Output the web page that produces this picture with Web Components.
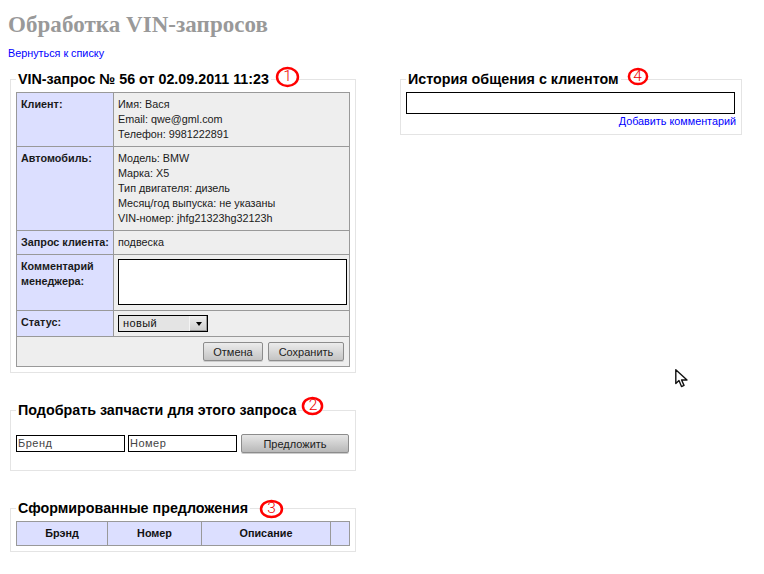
<!DOCTYPE html>
<html lang="ru"><head><meta charset="utf-8"><title>Обработка VIN-запросов</title>
<style>
html,body{margin:0;background:#fff}
body{font:10.8px/15px "Liberation Sans",Arial,sans-serif;color:#1a1a1a}
</style></head><body>
<vin-app></vin-app>
<script>
function el(name, html){
  customElements.define(name, class extends HTMLElement{
    constructor(){super();this.attachShadow({mode:'open'}).innerHTML=html;}
  });
}
const btnCss=`
button{font:11px "Liberation Sans",Arial,sans-serif;color:#222;border:1px solid #8c8c8c;border-radius:2px;padding:0;box-sizing:border-box;
background:linear-gradient(#ececec,#c4c4c4);box-shadow:0 1px 0 #ccc;}`;

el('mouse-pointer',`<style>:host{position:absolute;left:675px;top:369px;width:14px;height:19px;display:block}</style>
<svg width="14" height="19" viewBox="0 0 14 19"><path d="M.8.8 L.8 14.5 L4 11.6 L6.5 17.6 L9 16.4 L6.6 11 L12 11 Z" fill="#fff" stroke="#111" stroke-width="1.4" stroke-linejoin="round"/></svg>`);

el('vin-badge',`<style>
:host{position:absolute;display:flex;align-items:center;justify-content:center;
 left:calc(100% + var(--dx,6px));top:var(--dy,-3px);width:var(--w,22px);height:var(--h,19px);
 color:#e00;font:300 15.5px/1 Roboto,"Liberation Sans",Arial,sans-serif}
svg{position:absolute;inset:0;width:100%;height:100%;overflow:visible}
span{position:relative}
ellipse{fill:#fff;stroke:#f00;stroke-width:2.5}
</style><svg preserveAspectRatio="none" viewBox="0 0 22 19"><ellipse cx="11" cy="9.5" rx="10" ry="8.5" vector-effect="non-scaling-stroke"/></svg><span><slot></slot></span>`);

el('vin-panel',`<style>
:host{display:block}
fieldset{margin:0;border:1px solid #e4e4e4;padding:5px;min-width:0;display:block}
legend{margin:0;padding:0 2px;font:bold 14.3px/16px "Liberation Sans",Arial,sans-serif;color:#000;position:relative}
</style><fieldset><legend><slot name="title"></slot><slot name="badge"></slot></legend><slot></slot></fieldset>`);

el('data-row',`<style>
:host{display:grid;grid-template-columns:96px 1fr;column-gap:1px;background:#999;border-top:1px solid #999}
:host([first]){border-top:0}
.l{background:#dcdfff;padding:4px 3px 4px 4px;font-weight:bold;line-height:15px}
.v{background:#eee;padding:4px 3px 4px 4px;min-width:0;line-height:15px}
:host([tall]) .v{padding-bottom:5px}
</style><div class="l"><slot name="label"></slot></div><div class="v"><slot></slot></div>`);

el('data-form',`<style>
:host{display:block;border:1px solid #999;background:#999}
</style><slot></slot>`);

el('form-foot',`<style>
:host{display:flex;justify-content:flex-end;gap:5px;background:#eee;border-top:1px solid #999;padding:5px}
${btnCss}
button{height:19px}
.a{width:60px}.b{width:76px}
</style><button class="a">Отмена</button><button class="b">Сохранить</button>`);

el('fake-select',`<style>
:host{display:flex;box-sizing:border-box;width:90px;height:17px;border:1px solid #000;background:#e4e4e4;
 font:11px/15px "Liberation Sans",Arial,sans-serif;letter-spacing:.4px;color:#111}
.t{flex:1;padding-left:4px}
.b{width:17px;background:linear-gradient(#eee,#ccc);border-left:1px solid #f4f4f4;box-shadow:inset -1px -1px 0 #999;display:flex;align-items:center;justify-content:center}
.b i{width:0;height:0;border:3.5px solid transparent;border-top:4px solid #000;border-bottom:0}
</style><div class="t"><slot></slot></div><div class="b"><i></i></div>`);

el('part-search',`<style>
:host{display:flex;align-items:center;height:19px;margin-top:11px;margin-bottom:12px;position:relative}
${btnCss}
.f{box-sizing:border-box;width:109px;height:17px;border:1px solid #000;background:#fff;font:11px/15px "Liberation Sans",Arial,sans-serif;letter-spacing:.5px;color:#444;padding:0 1px;margin-right:3px}
.f+.f{margin-right:4px}
button{width:108px;height:19px;background:linear-gradient(#e6e6e6,#b8b8b8)}
</style><div class="f">Бренд</div><div class="f">Номер</div><button>Предложить</button>`);

el('offers-table',`<style>
:host{display:grid;grid-template-columns:90px 93px 128px 1fr;column-gap:1px;background:#999;border:1px solid #999;height:23px}
div{background:#dcdfff;font:bold 10.8px/23px "Liberation Sans",Arial,sans-serif;color:#111;text-align:center}
</style><div>Брэнд</div><div>Номер</div><div>Описание</div><div></div>`);

el('history-box',`<style>
:host{display:block}
.b{box-sizing:border-box;height:22px;border:1px solid #000;background:#fff;width:329px}
.a{text-align:right;line-height:15px;height:15px;color:#00f;display:block}
</style><div class="b"></div><div class="a"><slot></slot></div>`);

el('vin-app',`<style>
:host{display:block;position:relative;height:574px;overflow:hidden;font:10.8px/15px "Liberation Sans",Arial,sans-serif;color:#1a1a1a}
h1{margin:0;padding:12px 0 0 8px;font:bold 23px/26px "Liberation Serif","Times New Roman",serif;letter-spacing:.05px;color:#999}
.back{padding:8px 0 0 8px;height:33px;box-sizing:border-box}
a{color:#00f;text-decoration:none}
.cols{display:flex;gap:44px;padding-left:10px}
.left{width:346px;display:flex;flex-direction:column;gap:29px}
.right{width:342px}
.area{box-sizing:border-box;width:229px;height:46px;border:1px solid #000;background:#fff}
</style>
<h1>Обработка VIN-запросов</h1>
<div class="back"><a href="#">Вернуться к списку</a></div>
<div class="cols">
 <div class="left">
  <vin-panel>
   <span slot="title">VIN-запрос № 56 от 02.09.2011 11:23</span>
   <vin-badge slot="badge" style="--dx:5px;--dy:-4px;--w:23px;--h:20px">1</vin-badge>
   <data-form>
    <data-row first><span slot="label">Клиент:</span>Имя: Вася<br>Email: qwe@gml.com<br>Телефон: 9981222891</data-row>
    <data-row><span slot="label">Автомобиль:</span>Модель: BMW<br>Марка: X5<br>Тип двигателя: дизель<br>Месяц/год выпуска: не указаны<br>VIN-номер: jhfg21323hg32123h</data-row>
    <data-row><span slot="label">Запрос клиента:</span>подвеска</data-row>
    <data-row tall><span slot="label">Комментарий менеджера:</span><div class="area"></div></data-row>
    <data-row><span slot="label">Статус:</span><fake-select>новый</fake-select></data-row>
    <form-foot></form-foot>
   </data-form>
  </vin-panel>
  <vin-panel>
   <span slot="title">Подобрать запчасти для этого запроса</span>
   <vin-badge slot="badge" style="--dx:4px;--dy:-5px;--w:21px;--h:18px">2</vin-badge>
   <part-search></part-search>
  </vin-panel>
  <vin-panel>
   <span slot="title">Сформированные предложения</span>
   <vin-badge slot="badge" style="--dx:10px;--dy:0px;--w:23px;--h:18px">3</vin-badge>
   <offers-table></offers-table>
  </vin-panel>
 </div>
 <div class="right">
  <vin-panel>
   <span slot="title">История общения с клиентом</span>
   <vin-badge slot="badge" style="--dx:7px;--dy:-3px;--w:20px;--h:17px">4</vin-badge>
   <history-box><a href="#">Добавить комментарий</a></history-box>
  </vin-panel>
 </div>
</div>
<mouse-pointer></mouse-pointer>`);
</script>
</body></html>
